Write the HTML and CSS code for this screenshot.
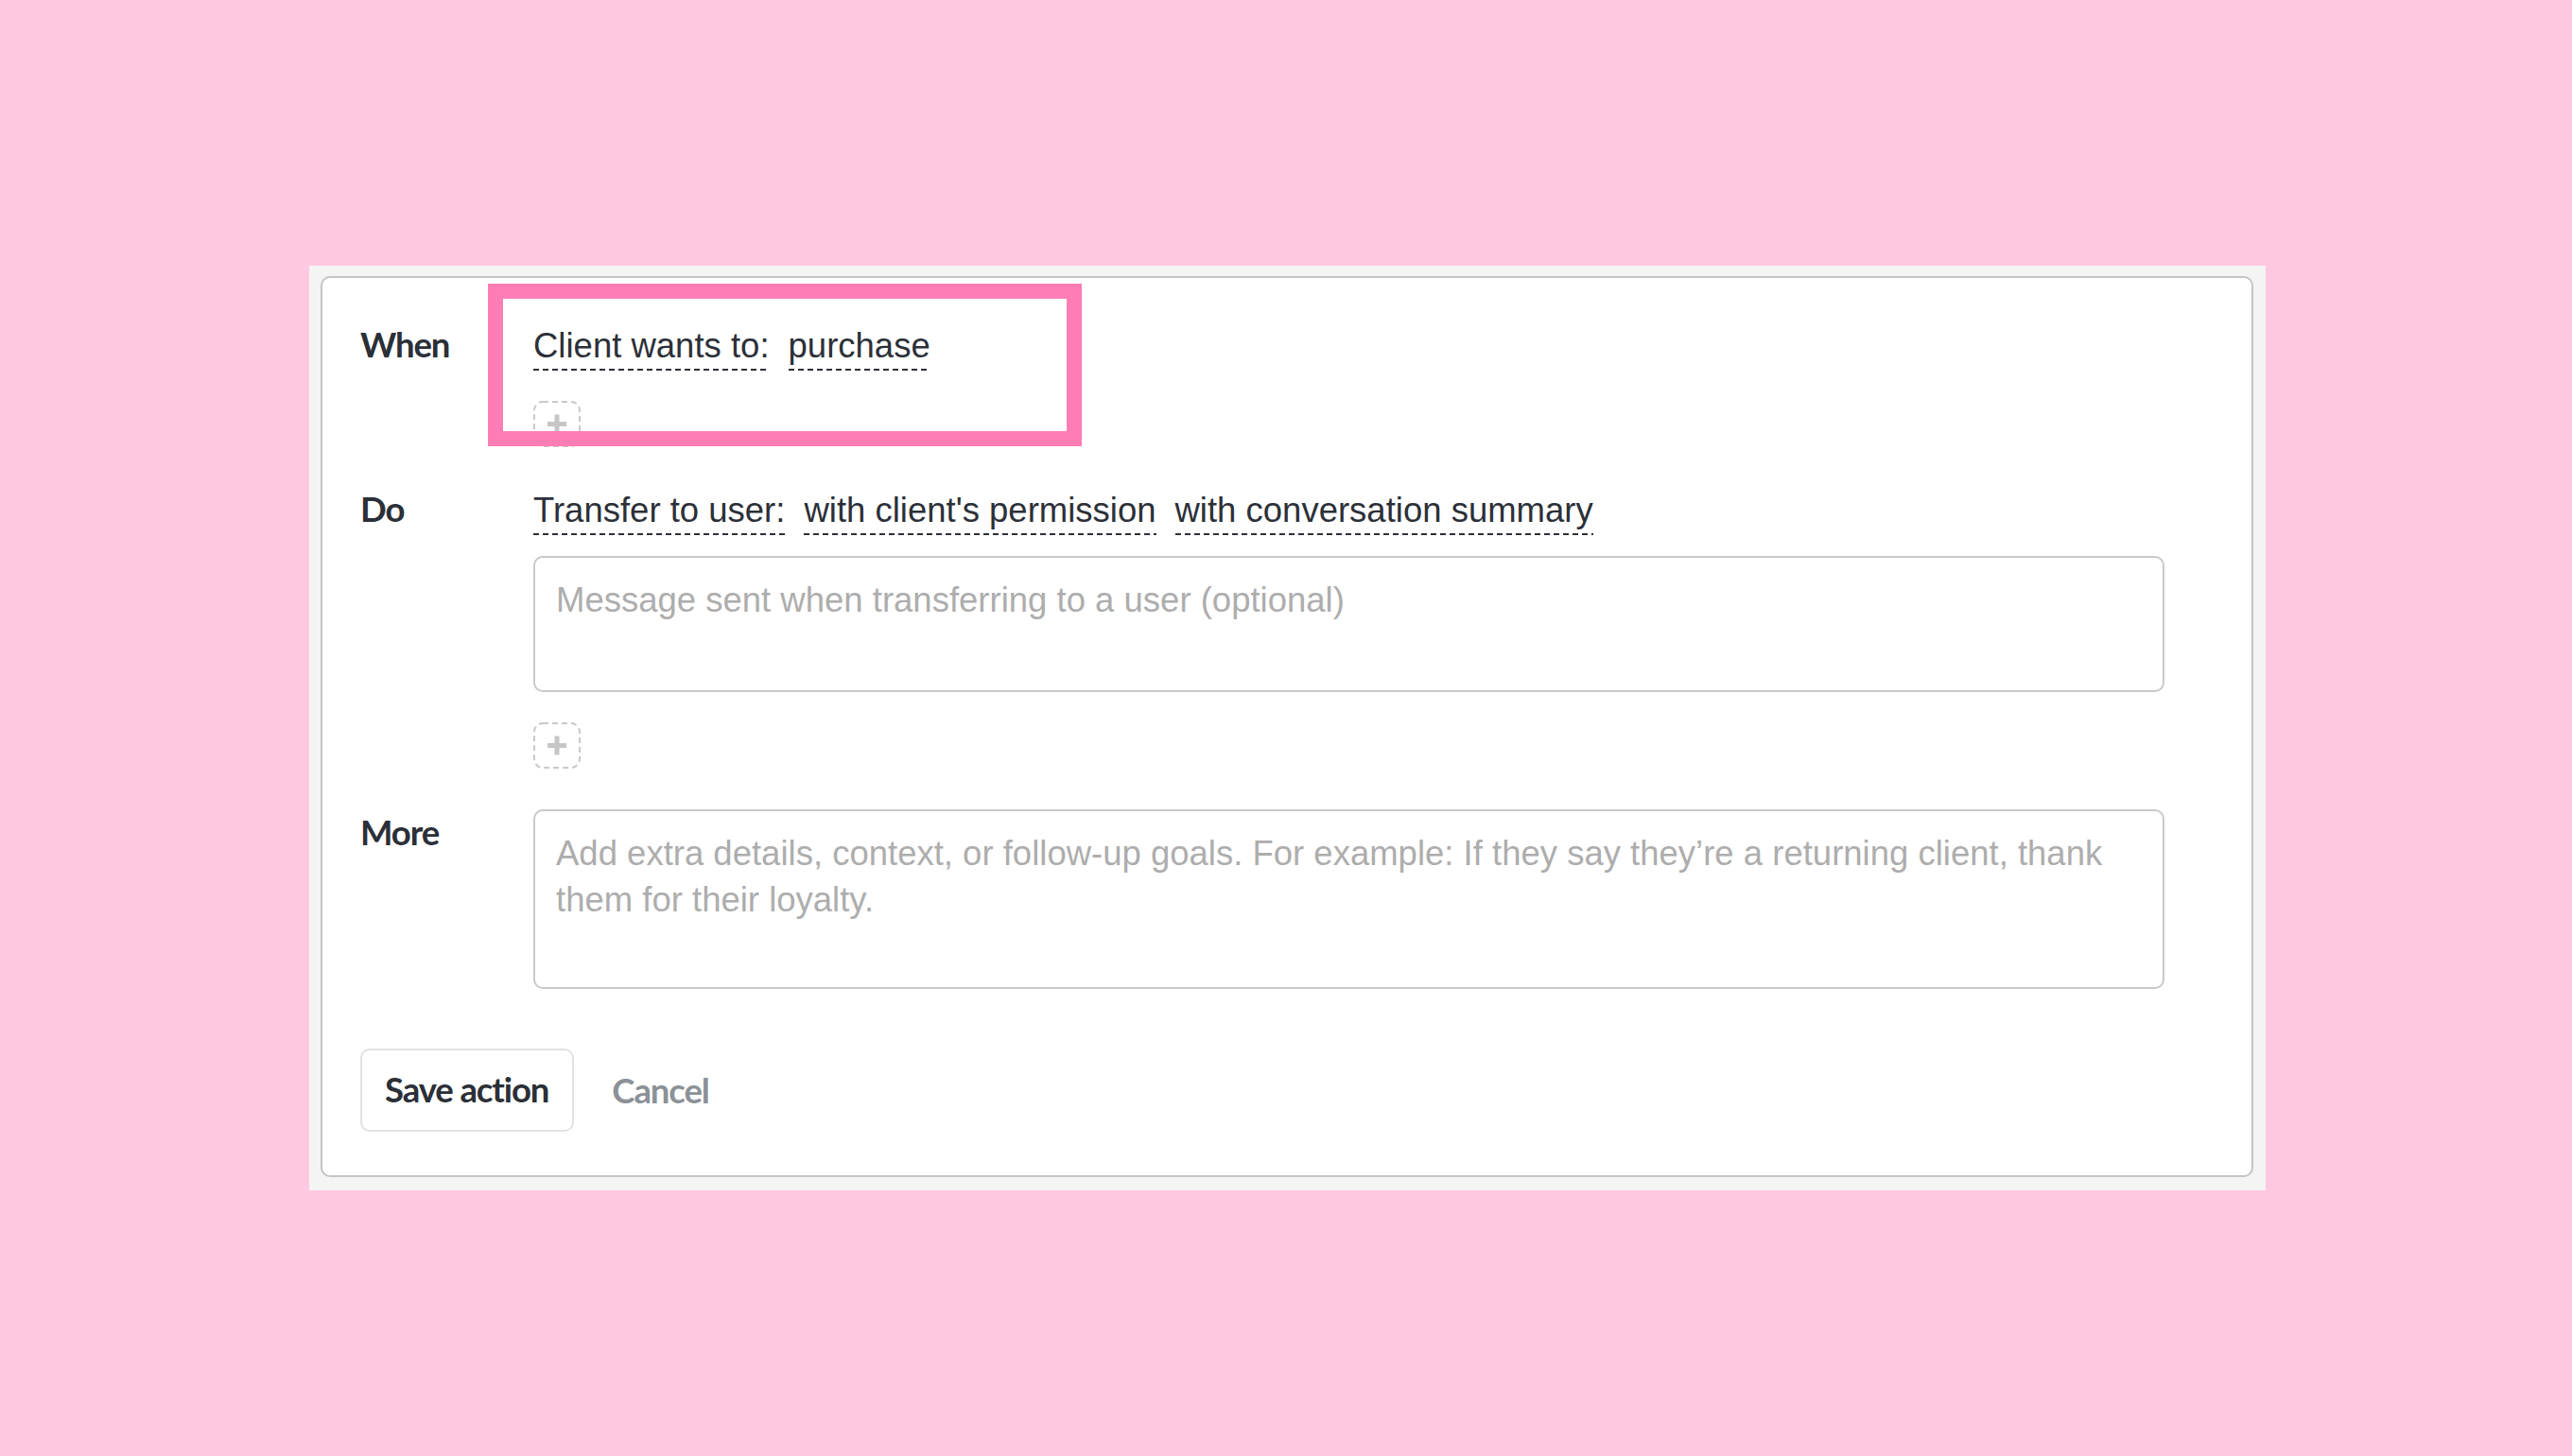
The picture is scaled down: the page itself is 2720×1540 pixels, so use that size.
FILE: index.html
```html
<!DOCTYPE html>
<html lang="en">
<head>
<meta charset="utf-8">
<title>Action editor</title>
<link rel="stylesheet" href="styles.css">
</head>
<body>
<div class="panel">
  <div class="card">
    <div class="section">
      <div class="label">When</div>
      <div class="content">
        <div class="tokens">
          <span class="token">Client wants to:</span>
          <span class="token">purchase</span>
        </div>
        <div class="add add-after-tokens">
          <svg width="50" height="49" viewBox="0 0 50 49"><rect x="1" y="1" width="48" height="47" rx="9" fill="none" stroke="#c9c9c9" stroke-width="2" stroke-dasharray="6 4"/><path d="M25 14.5v20M15 24.5h20" stroke="#c6c6c6" stroke-width="5"/></svg>
        </div>
      </div>
    </div>

    <div class="section">
      <div class="label">Do</div>
      <div class="content">
        <div class="tokens">
          <span class="token">Transfer to user:</span>
          <span class="token">with client's permission</span>
          <span class="token">with conversation summary</span>
        </div>
        <textarea class="field field-short" placeholder="Message sent when transferring to a user (optional)"></textarea>
        <div class="add add-after-field">
          <svg width="50" height="49" viewBox="0 0 50 49"><rect x="1" y="1" width="48" height="47" rx="9" fill="none" stroke="#c9c9c9" stroke-width="2" stroke-dasharray="6 4"/><path d="M25 14.5v20M15 24.5h20" stroke="#c6c6c6" stroke-width="5"/></svg>
        </div>
      </div>
    </div>

    <div class="section section-more">
      <div class="label">More</div>
      <div class="content">
        <textarea class="field field-tall" placeholder="Add extra details, context, or follow-up goals. For example: If they say they’re a returning client, thank them for their loyalty."></textarea>
      </div>
    </div>

    <div class="actions">
      <button class="btn-save" type="button">Save action</button>
      <button class="btn-cancel" type="button">Cancel</button>
    </div>

    <div class="highlight"></div>
  </div>
</div>
</body>
</html>
```

FILE: styles.css
```css
html, body {
  margin: 0;
  background: #fec9e0;
}
body {
  padding: 281px 0 0 327px;
  min-height: 1540px;
  box-sizing: border-box;
  overflow: hidden;
  font-family: "Liberation Sans", Arial, sans-serif;
  font-size: 36.5px;
  color: #2c3038;
}
.panel {
  width: 2069px;
  box-sizing: border-box;
  padding: 11px 13px 14px 12px;
  background: #f4f4f4;
}
.card {
  position: relative;
  background: #ffffff;
  border: 2px solid #c4c4c4;
  border-radius: 10px;
  padding: 46.7px 0 45.6px 40px;
  display: flex;
  flex-direction: column;
}
.section {
  display: flex;
  align-items: flex-start;
}
.section + .section {
  margin-top: 42.5px;
}
.label {
  width: 183px;
  flex: none;
  font-family: Lato, "Liberation Sans", sans-serif;
  font-weight: 700;
  letter-spacing: -1.1px;
  line-height: 46px;
  color: #2b2f37;
}
.section-more .label {
  margin-top: 1px;
}
.content {
  width: 1725px;
  display: flex;
  flex-direction: column;
  align-items: flex-start;
}
.tokens {
  display: flex;
  gap: 20px;
}
.token {
  display: block;
  line-height: 49px;
  padding-bottom: 2px;
  white-space: nowrap;
  background-image: linear-gradient(to right, #2c3038 6px, transparent 6px);
  background-size: 10px 2px;
  background-repeat: repeat-x;
  background-position: 0 100%;
}
.add {
  width: 50px;
  height: 49px;
}
.add svg {
  display: block;
}
.add-after-tokens {
  margin-top: 32px;
}
.add-after-field {
  margin-top: 32px;
}
.field {
  display: block;
  width: 1725px;
  box-sizing: border-box;
  margin: 22px 0 0;
  padding: 20px 22px;
  border: 2px solid #c9c9c9;
  border-radius: 10px;
  font-family: "Liberation Sans", Arial, sans-serif;
  font-size: 36.5px;
  line-height: 49px;
  color: #2c3038;
  background: #ffffff;
  resize: none;
  outline: none;
  overflow: hidden;
}
.field::placeholder {
  color: #adadad;
  opacity: 1;
}
.field-short {
  height: 144px;
}
.field-tall {
  height: 190px;
  margin-top: 0;
}
.actions {
  margin-top: 63.3px;
  display: flex;
  align-items: center;
}
.btn-save {
  font-family: Lato, "Liberation Sans", sans-serif;
  font-weight: 700;
  font-size: 36.5px;
  letter-spacing: -1.1px;
  line-height: 46px;
  color: #2b2f37;
  background: #ffffff;
  border: 2px solid #e2e2e2;
  border-radius: 10px;
  padding: 17.7px 25px 20.7px 24px;
  margin: 0;
  cursor: pointer;
}
.btn-cancel {
  font-family: Lato, "Liberation Sans", sans-serif;
  font-weight: 700;
  font-size: 36.5px;
  letter-spacing: -1.1px;
  line-height: 46px;
  color: #8b9197;
  background: none;
  border: 0;
  padding: 0;
  margin: 0 0 0 40px;
  cursor: pointer;
}
.highlight {
  position: absolute;
  left: 175px;
  top: 6px;
  width: 628px;
  height: 172px;
  box-sizing: border-box;
  border: 16px solid #ff7db5;
  pointer-events: none;
}
```
